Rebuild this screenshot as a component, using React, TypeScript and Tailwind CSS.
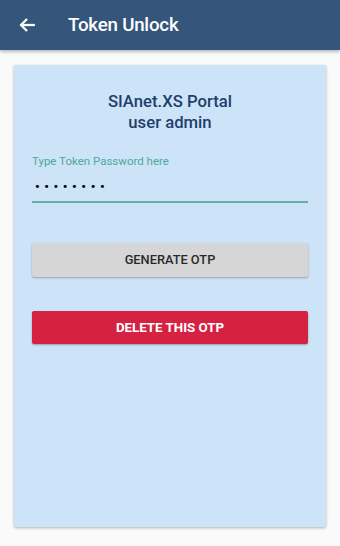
import React from "react";

export default function App() {
  return (
    <div className="w-[340px] h-[546px] bg-[#fafafa] flex flex-col overflow-hidden" style={{ fontFamily: "Roboto, 'Liberation Sans', sans-serif" }}>
      <div className="h-[50px] bg-[#34567a] flex items-center shrink-0 shadow-[0_2px_3px_rgba(0,0,0,0.25)] z-10">
        <div className="w-[68px] pl-[18px] flex items-center">
          <svg width="18" height="18" viewBox="0 0 24 24" fill="none" stroke="white" strokeWidth="3" strokeLinecap="square">
            <path d="M21 12H5" />
            <path d="M11 5l-7 7 7 7" />
          </svg>
        </div>
        <div className="text-white text-[18.7px] font-medium tracking-[-0.2px]">Token Unlock</div>
      </div>
      <div className="flex-1 px-[14px] pt-[15px] pb-[19px]">
        <div className="h-full bg-[#cde3f8] rounded-[2px] shadow-[0_1px_3px_rgba(0,0,0,0.3)] px-[18px] flex flex-col">
          <div className="pt-[26px] text-center text-[#1f3f6b] text-[16.7px] font-medium leading-[21px]">
            <div>SIAnet.XS Portal</div>
            <div>user admin</div>
          </div>
          <div className="mt-[21px] text-[#4da99b] text-[11.5px] leading-[14px]">Type Token Password here</div>
          <div className="mt-[11px] text-black text-[13px] leading-[16px] tracking-[4.6px] pl-[3px] font-bold">••••••••</div>
          <div className="mt-[6px] h-[2px] bg-[#62b1a4]" />
          <div className="mt-[40px] h-[34px] bg-[#d6d6d6] rounded-[2px] shadow-[0_1px_2px_rgba(0,0,0,0.3)] flex items-center justify-center text-[#2a2a2a] text-[12.8px] font-medium">
            GENERATE OTP
          </div>
          <div className="mt-[34px] h-[33px] bg-[#d52242] rounded-[2px] shadow-[0_1px_2px_rgba(0,0,0,0.3)] flex items-center justify-center text-white text-[13.3px] font-bold">
            DELETE THIS OTP
          </div>
        </div>
      </div>
    </div>
  );
}
